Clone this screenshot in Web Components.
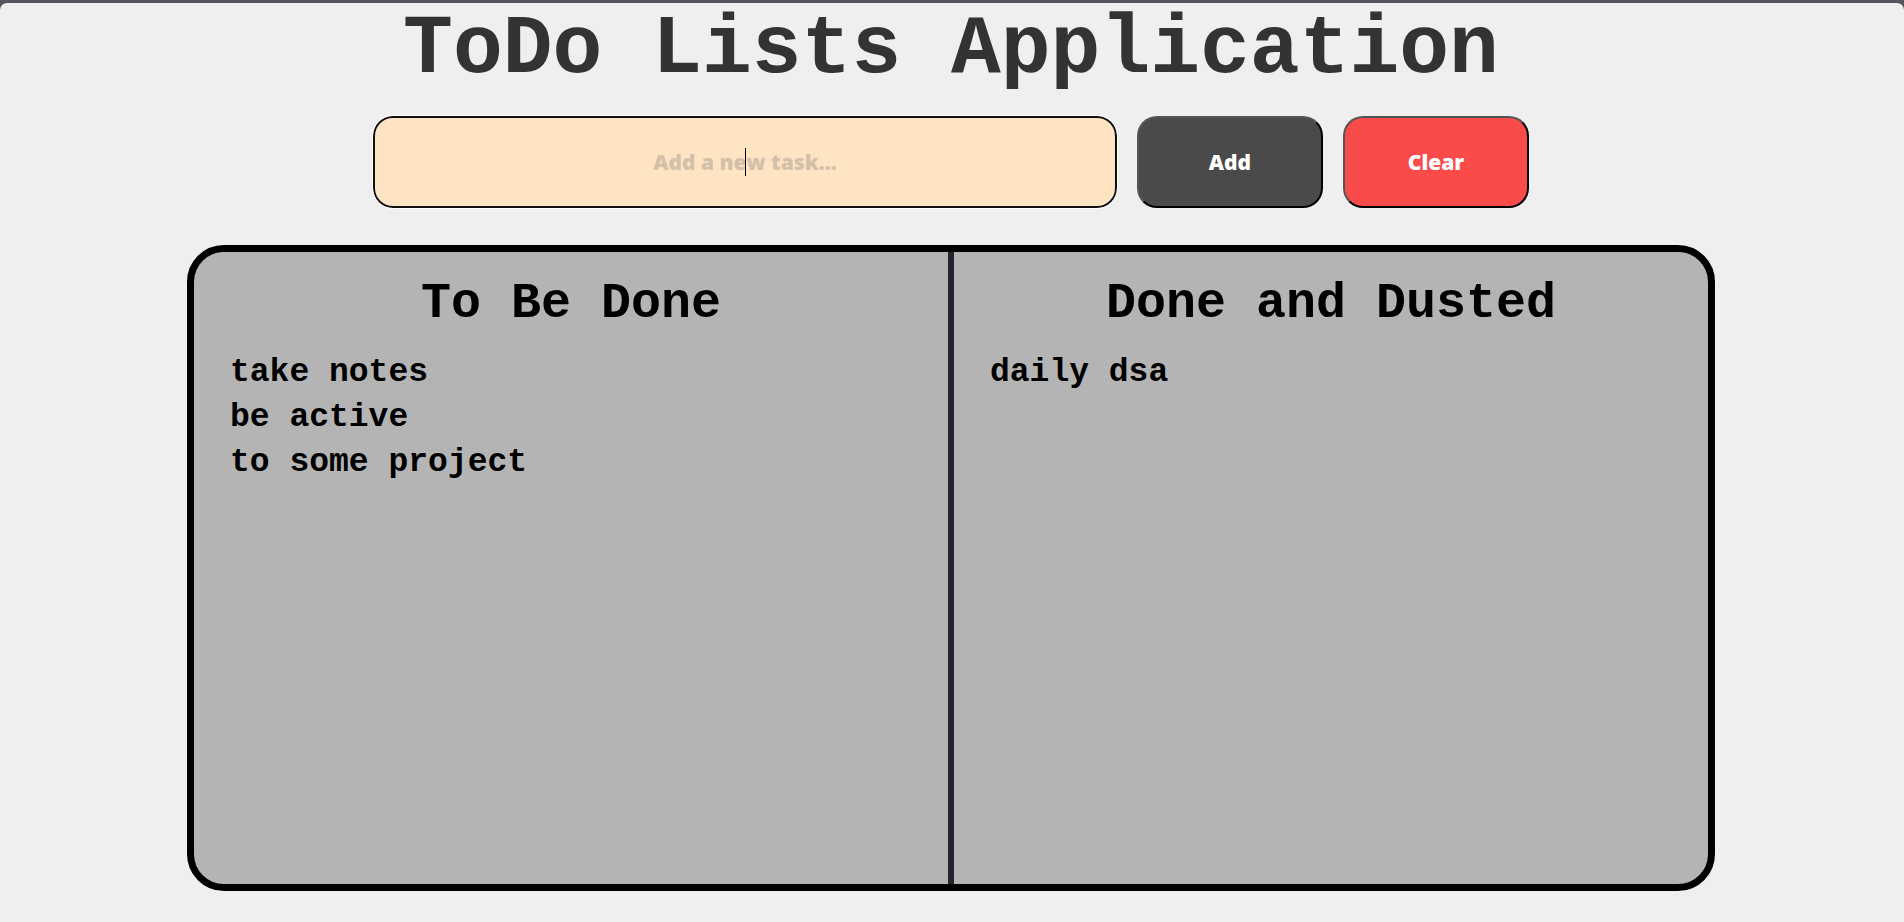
<!DOCTYPE html>
<html lang="en">
<head>
<meta charset="utf-8">
<meta name="viewport" content="width=device-width, initial-scale=1">
<title>ToDo Lists Application</title>
<style>
  html { background: #54565b; }
  body {
    margin: 0;
    --display: "Liberation Mono", monospace;
    --heavy: "Open Sans", "Liberation Sans", sans-serif;
  }
</style>
</head>
<body>
<todo-app>
  <span slot="title">ToDo Lists Application</span>
  <task-form slot="form"></task-form>
  <task-board slot="board">
    <task-column heading="To Be Done">
      <task-item>take notes</task-item>
      <task-item>be active</task-item>
      <task-item>to some project</task-item>
    </task-column>
    <task-column heading="Done and Dusted">
      <task-item>daily dsa</task-item>
    </task-column>
  </task-board>
</todo-app>
<script>
class ShadowElement extends HTMLElement {
  constructor() {
    super();
    this.attachShadow({ mode: "open" }).innerHTML = this.constructor.markup;
  }
}

class TodoApp extends ShadowElement {
  static markup = `
    <style>
      :host { display: block; padding-top: 3px; }
      main {
        box-sizing: border-box;
        display: flex;
        flex-direction: column;
        align-items: center;
        min-height: calc(100vh - 3px);
        padding: 0 25px 31px 23px;
        background: #efefef;
        border-radius: 7px 7px 0 0;
      }
      h1 {
        margin: 0 0 19px;
        font: bold 83px/94px var(--display);
        color: #333;
        text-align: center;
      }
      slot[name="form"], slot[name="board"] { display: contents; }
    </style>
    <main>
      <h1><slot name="title"></slot></h1>
      <slot name="form"></slot>
      <slot name="board"></slot>
    </main>`;
}

class TaskForm extends ShadowElement {
  static markup = `
    <style>
      :host { display: block; width: 100%; max-width: 1156px; margin-bottom: 37px; }
      form { display: grid; grid-template-columns: 4fr 1fr 1fr; gap: 20px; }
      .field { position: relative; display: grid; }
      /* insertion point in the empty, centred field */
      .field::after {
        content: "";
        position: absolute;
        left: 50%;
        top: 32px;
        width: 1px;
        height: 28px;
        background: #000;
      }
      input, button {
        box-sizing: border-box;
        width: 100%;
        min-width: 0;
        height: 92px;
        margin: 0;
        border-radius: 20px;
        font: 800 21px/28px var(--heavy);
        text-align: center;
      }
      input {
        border: 2px solid #101010;
        background: #ffe4c4;
        color: #000;
        caret-color: transparent;
        outline: 1px solid #fff;
      }
      input::placeholder { color: #d2c0a9; opacity: 1; }
      button { border: 2px outset #000; color: #fff; }
      .add { background: #4a4a4a; }
      .clear { background: #fa4b4b; }
    </style>
    <form>
      <div class="field"><input type="text" aria-label="New task" placeholder="Add a new task..." autocomplete="off"></div>
      <button class="add" type="submit">Add</button>
      <button class="clear" type="button">Clear</button>
    </form>`;

  connectedCallback() {
    const root = this.shadowRoot;
    const input = root.querySelector("input");
    root.querySelector("form").addEventListener("submit", (event) => {
      event.preventDefault();
      const text = input.value.trim();
      if (!text) return;
      const item = document.createElement("task-item");
      item.textContent = text;
      document.querySelector("task-column").append(item);
      input.value = "";
    });
    root.querySelector(".clear").addEventListener("click", () => {
      document.querySelectorAll("task-item").forEach((item) => item.remove());
    });
  }
}

class TaskBoard extends ShadowElement {
  static markup = `
    <style>
      :host {
        box-sizing: border-box;
        display: flex;
        flex: 1;
        width: 100%;
        max-width: 1528px;
        border: 7px solid #000;
        border-radius: 37px;
        background: #b4b4b4;
      }
      ::slotted(task-column) { flex: 1; }
      ::slotted(task-column:first-child) { border-right: 6px solid #24262d; }
    </style>
    <slot></slot>`;
}

class TaskColumn extends ShadowElement {
  static markup = `
    <style>
      :host { display: block; min-width: 0; padding: 24px 0; color: #000; }
      h2 {
        margin: 0 0 18px;
        font: bold 50px/56px var(--display);
        text-align: center;
      }
      .list { padding: 0 36px; }
    </style>
    <h2></h2>
    <div class="list" role="list"><slot></slot></div>`;

  connectedCallback() {
    this.shadowRoot.querySelector("h2").textContent = this.getAttribute("heading");
  }
}

class TaskItem extends ShadowElement {
  static markup = `
    <style>
      :host { display: block; font: bold 33px/45px var(--display); overflow-wrap: anywhere; }
    </style>
    <slot></slot>`;

  connectedCallback() { this.setAttribute("role", "listitem"); }
}

customElements.define("todo-app", TodoApp);
customElements.define("task-form", TaskForm);
customElements.define("task-board", TaskBoard);
customElements.define("task-column", TaskColumn);
customElements.define("task-item", TaskItem);
</script>
</body>
</html>
